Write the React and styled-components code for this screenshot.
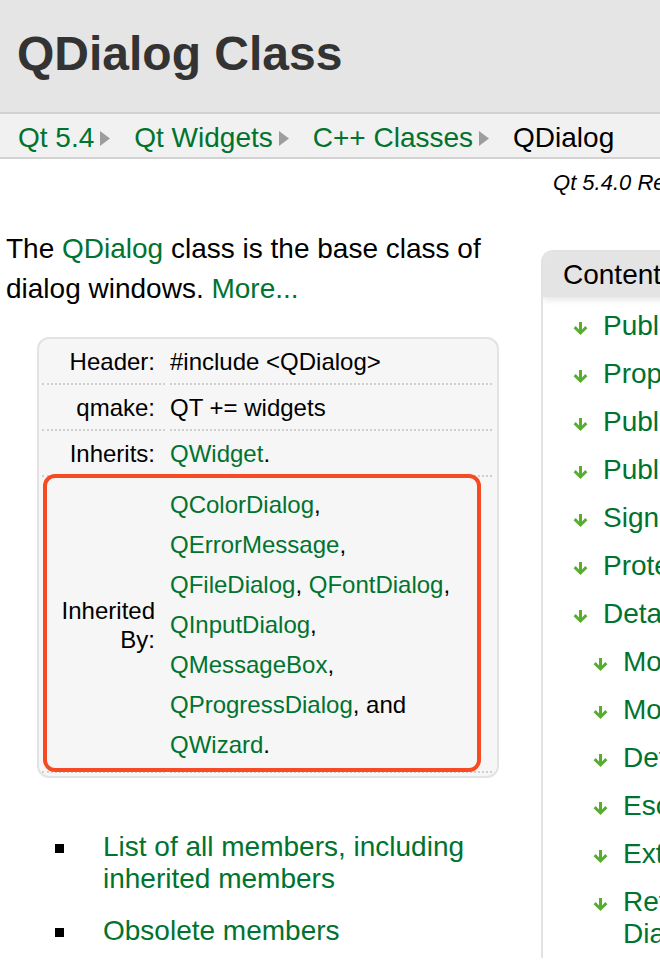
import React from 'react'
import styled, { createGlobalStyle } from 'styled-components'

const GlobalStyle = createGlobalStyle`
  html, body {
    margin: 0;
    padding: 0;
    overflow: hidden;
    background: #fff;
  }
  body {
    font-family: 'Liberation Sans', Arial, Helvetica, sans-serif;
    color: #000;
  }
`

const Page = styled.div`
  width: 920px;
`

const TitleBar = styled.header`
  height: 107px;
  padding: 0 0 5px 17px;
  display: flex;
  align-items: center;
  background: #e5e5e5;
  border-bottom: 2px solid #d2d2d2;
`

const Title = styled.h1`
  margin: 0;
  font-size: 48px;
  line-height: 48px;
  font-weight: 700;
  color: #333;
`

const Breadcrumbs = styled.nav`
  height: 39px;
  padding: 4px 0 0 18px;
  display: flex;
  align-items: center;
  background: #f1f1f1;
  border-bottom: 2px solid #d2d2d2;
  font-size: 28px;
`

const Crumb = styled.a`
  color: ${(props) => (props.$current ? '#000' : '#00732f')};
  text-decoration: none;
  line-height: 32px;
`

const CrumbArrow = styled.svg`
  flex: none;
  margin: 2px 24px 0 6px;
`

const Version = styled.div`
  margin-top: 11px;
  padding-right: 27px;
  text-align: right;
  font-size: 22px;
  line-height: 26px;
  font-style: italic;
`

const Content = styled.div`
  display: flex;
  align-items: flex-start;
  gap: 25px;
  margin-top: 33px;
  padding-left: 6px;
`

const Main = styled.main`
  flex: none;
  width: 510px;
`

const Intro = styled.p`
  margin: 0;
  font-size: 28px;
  line-height: 40px;
`

const Link = styled.a`
  color: #00732f;
  text-decoration: none;
`

const InfoBox = styled.div`
  position: relative;
  box-sizing: border-box;
  width: 462px;
  margin: 28px 0 0 31px;
  padding: 0 5px 3px 3px;
  background: #f6f6f6;
  border: 2px solid #e3e3e3;
  border-radius: 12px;
`

const InfoRow = styled.div`
  position: relative;
  display: grid;
  grid-template-columns: 123px 1fr;
  column-gap: 5px;
`

const Label = styled.div`
  display: flex;
  align-items: center;
  justify-content: flex-end;
  padding: 8px 10px 6px 6px;
  text-align: right;
  font-size: 24px;
  line-height: ${(props) => (props.$tall ? '29px' : '30px')};
  border-bottom: 2px dotted #cfcfcf;
`

const Value = styled.div`
  padding: 8px 8px 6px 0;
  font-size: 24px;
  line-height: ${(props) => (props.$tall ? '40px' : '30px')};
  border-bottom: 2px dotted #cfcfcf;
`

const Highlight = styled.div`
  position: absolute;
  left: 1px;
  right: 11px;
  top: -3px;
  bottom: 1px;
  border: 4px solid #f84a22;
  border-radius: 12px;
  pointer-events: none;
`

const MemberList = styled.ul`
  list-style: none;
  margin: 53px 0 0;
  padding: 0 0 0 49px;
  display: flex;
  flex-direction: column;
  gap: 20px;
`

const MemberItem = styled.li`
  display: flex;
  align-items: flex-start;
  font-size: 28px;
  line-height: 32px;
`

const Bullet = styled.span`
  flex: none;
  width: 9px;
  height: 9px;
  margin: 13px 39px 0 0;
  background: #000;
`

const Sidebar = styled.aside`
  flex: none;
  width: 359px;
  margin-top: 21px;
  border-left: 2px solid #e2e2e2;
  border-top: 2px solid #e2e2e2;
  border-top-left-radius: 12px;
  overflow: hidden;
`

const SidebarHeader = styled.div`
  position: relative;
  height: 45px;
  padding-left: 20px;
  background: #e4e4e4;
  font-size: 28px;
  line-height: 45px;
  box-shadow: 0 3px 6px rgba(0, 0, 0, 0.1);
`

const TocList = styled.ul`
  list-style: none;
  margin: 0;
  padding: 5px 10px 0 0;
`

const TocItem = styled.li`
  display: flex;
  align-items: flex-start;
  padding: 8px 0 8px ${(props) => (props.$sub ? '50px' : '30px')};
  font-size: 28px;
  line-height: 32px;
`

const TocArrow = styled.svg`
  flex: none;
  margin: 12px 15px 0 0;
`

const crumbs = ['Qt 5.4', 'Qt Widgets', 'C++ Classes']

const toc = [
  { title: 'Public Types' },
  { title: 'Properties' },
  { title: 'Public Functions' },
  { title: 'Public Slots' },
  { title: 'Signals' },
  { title: 'Protected Functions' },
  { title: 'Detailed Description' },
  { title: 'Modal Dialogs', sub: true },
  { title: 'Modeless Dialogs', sub: true },
  { title: 'Default Button', sub: true },
  { title: 'Escape Key', sub: true },
  { title: 'Extensibility', sub: true },
  { title: 'Return Value (Modal Dialogs)', sub: true },
]

function GreenArrow() {
  return (
    <TocArrow width="15" height="14" viewBox="0 0 15 14">
      <path
        d="M6 0h3v7.4l3.3-3.3 2.1 2.1-6.9 6.9L0.6 6.2l2.1-2.1L6 7.4z"
        fill="#58ad31"
      />
    </TocArrow>
  )
}

export default function App() {
  return (
    <Page>
      <GlobalStyle />
      <TitleBar>
        <Title>QDialog Class</Title>
      </TitleBar>

      <Breadcrumbs>
        {crumbs.map((c) => (
          <React.Fragment key={c}>
            <Crumb href="#">{c}</Crumb>
            <CrumbArrow width="10" height="15" viewBox="0 0 10 15">
              <path d="M0 0L10 7.5L0 15z" fill="#9d9d9d" />
            </CrumbArrow>
          </React.Fragment>
        ))}
        <Crumb $current>QDialog</Crumb>
      </Breadcrumbs>

      <Version>Qt 5.4.0 Reference Documentation</Version>

      <Content>
        <Main>
          <Intro>
            The <Link href="#">QDialog</Link> class is the base class of dialog
            windows. <Link href="#">More...</Link>
          </Intro>

          <InfoBox>
            <InfoRow>
              <Label>Header:</Label>
              <Value>#include &lt;QDialog&gt;</Value>
            </InfoRow>
            <InfoRow>
              <Label>qmake:</Label>
              <Value>QT += widgets</Value>
            </InfoRow>
            <InfoRow>
              <Label>Inherits:</Label>
              <Value>
                <Link href="#">QWidget</Link>.
              </Value>
            </InfoRow>
            <InfoRow>
              <Label $tall>Inherited By:</Label>
              <Value $tall>
                <Link href="#">QColorDialog</Link>,{' '}
                <Link href="#">QErrorMessage</Link>,{' '}
                <Link href="#">QFileDialog</Link>,{' '}
                <Link href="#">QFontDialog</Link>,{' '}
                <Link href="#">QInputDialog</Link>,{' '}
                <Link href="#">QMessageBox</Link>,{' '}
                <Link href="#">QProgressDialog</Link>, and{' '}
                <Link href="#">QWizard</Link>.
              </Value>
              <Highlight />
            </InfoRow>
          </InfoBox>

          <MemberList>
            <MemberItem>
              <Bullet />
              <Link href="#">List of all members, including inherited members</Link>
            </MemberItem>
            <MemberItem>
              <Bullet />
              <Link href="#">Obsolete members</Link>
            </MemberItem>
          </MemberList>
        </Main>

        <Sidebar>
          <SidebarHeader>Contents</SidebarHeader>
          <TocList>
            {toc.map((item) => (
              <TocItem key={item.title} $sub={item.sub}>
                <GreenArrow />
                <Link href="#">{item.title}</Link>
              </TocItem>
            ))}
          </TocList>
        </Sidebar>
      </Content>
    </Page>
  )
}
